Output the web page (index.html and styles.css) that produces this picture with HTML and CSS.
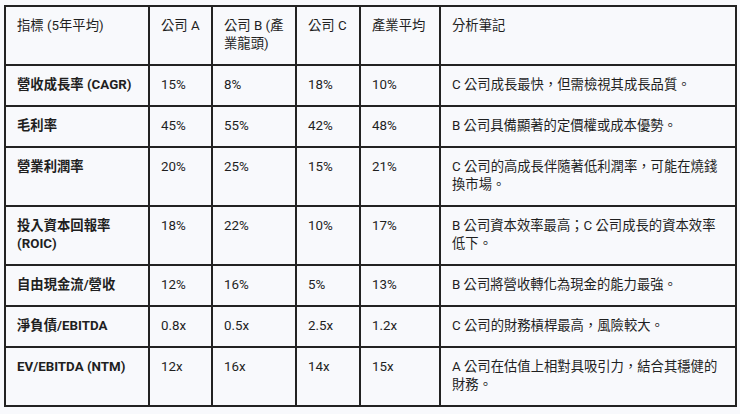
FILE: index.html
```html
<!DOCTYPE html>
<html lang="zh-Hant">
<head>
<meta charset="utf-8">
<link rel="stylesheet" href="styles.css">
</head>
<body>
<table class="grid">
  <colgroup>
    <col class="c1"><col class="c2"><col class="c3"><col class="c4"><col class="c5"><col class="c6">
  </colgroup>
  <thead>
    <tr>
      <th>指標 (5年平均)</th>
      <th>公司 A</th>
      <th>公司 B (產業龍頭)</th>
      <th>公司 C</th>
      <th>產業平均</th>
      <th>分析筆記</th>
    </tr>
  </thead>
  <tbody>
    <tr>
      <td class="metric">營收成長率 (CAGR)</td>
      <td>15%</td><td>8%</td><td>18%</td><td>10%</td>
      <td>C 公司成長最快，但需檢視其成長品質。</td>
    </tr>
    <tr>
      <td class="metric">毛利率</td>
      <td>45%</td><td>55%</td><td>42%</td><td>48%</td>
      <td>B 公司具備顯著的定價權或成本優勢。</td>
    </tr>
    <tr>
      <td class="metric">營業利潤率</td>
      <td>20%</td><td>25%</td><td>15%</td><td>21%</td>
      <td>C 公司的高成長伴隨著低利潤率，可能在燒錢換市場。</td>
    </tr>
    <tr>
      <td class="metric">投入資本回報率 (ROIC)</td>
      <td>18%</td><td>22%</td><td>10%</td><td>17%</td>
      <td>B 公司資本效率最高；C 公司成長的資本效率低下。</td>
    </tr>
    <tr>
      <td class="metric">自由現金流/營收</td>
      <td>12%</td><td>16%</td><td>5%</td><td>13%</td>
      <td>B 公司將營收轉化為現金的能力最強。</td>
    </tr>
    <tr>
      <td class="metric">淨負債/EBITDA</td>
      <td>0.8x</td><td>0.5x</td><td>2.5x</td><td>1.2x</td>
      <td>C 公司的財務槓桿最高，風險較大。</td>
    </tr>
    <tr>
      <td class="metric">EV/EBITDA (NTM)</td>
      <td>12x</td><td>16x</td><td>14x</td><td>15x</td>
      <td>A 公司在估值上相對具吸引力，結合其穩健的財務。</td>
    </tr>
  </tbody>
</table>
</body>
</html>
```

FILE: styles.css
```css
html, body {
  margin: 0;
  padding: 0;
  background: #f8f9fc;
}
body {
  padding: 5px 0 0 4px;
  font-family: Roboto, "Noto Sans CJK TC", sans-serif;
  font-size: 13.33px;
  color: #1f1f1f;
}
.grid {
  border-collapse: collapse;
  table-layout: fixed;
  width: 731px;
}
.c1 { width: 144px; }
.c2 { width: 63px; }
.c3 { width: 84px; }
.c4 { width: 64px; }
.c5 { width: 80px; }
.c6 { width: 296px; }
.grid th,
.grid td {
  border: 2px solid #222;
  padding: 10px 8px 11px 11px;
  line-height: 18px;
  text-align: left;
  vertical-align: top;
  font-weight: 400;
}
.grid td.metric {
  font-weight: 700;
}
```
